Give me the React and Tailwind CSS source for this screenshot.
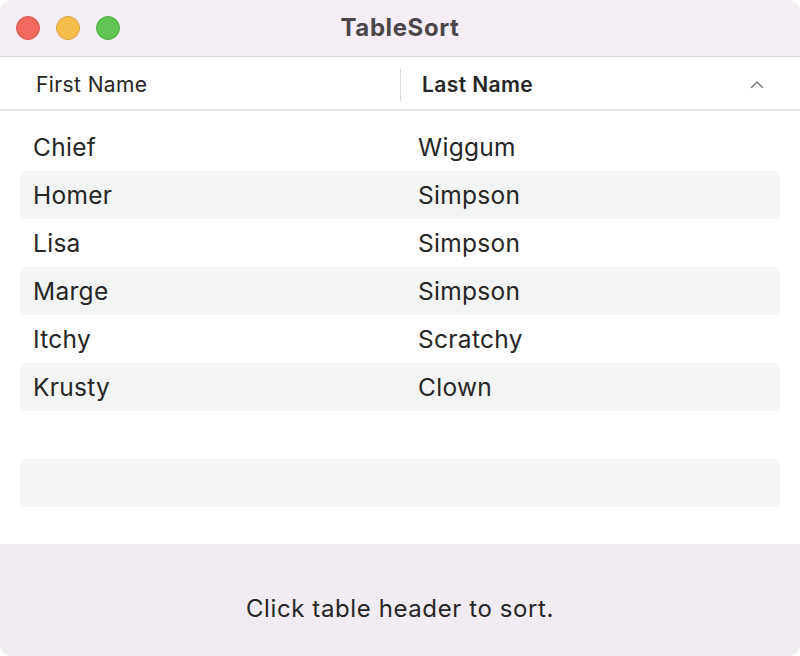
const rows = [
  ["Chief", "Wiggum"],
  ["Homer", "Simpson"],
  ["Lisa", "Simpson"],
  ["Marge", "Simpson"],
  ["Itchy", "Scratchy"],
  ["Krusty", "Clown"],
  ["", ""],
  ["", ""],
];

export default function App() {
  return (
    <div className="h-[656px] w-[800px] bg-white" style={{ fontFamily: "Inter, 'Noto Sans', sans-serif" }}>
      <div className="flex h-full w-full flex-col overflow-hidden rounded-[12px] bg-white text-[#262626]">
        {/* title bar */}
        <div className="relative flex h-[57px] shrink-0 items-center justify-center border-b border-[#d9d7da] bg-[#f5eef5]">
          <div className="absolute left-[16px] top-[16px] flex gap-[16px]">
            <span className="h-[24px] w-[24px] rounded-full border border-[#d9574c] bg-[#ee6a5f]" />
            <span className="h-[24px] w-[24px] rounded-full border border-[#dca33b] bg-[#f5be4f]" />
            <span className="h-[24px] w-[24px] rounded-full border border-[#4fae43] bg-[#61c454]" />
          </div>
          <span className="text-[24px] font-bold tracking-[0.6px] text-[#4b464a]">TableSort</span>
        </div>

        {/* header */}
        <div className="flex h-[54px] shrink-0 items-center border-b-2 border-[#e4e4e4] pt-[3px] text-[21px] tracking-[0.4px]">
          <div className="w-[400px] pl-[36px]">First Name</div>
          <div className="h-[32px] w-px bg-[#dcdcdc]" />
          <div className="flex flex-1 items-center justify-between pl-[21px] pr-[36px] font-semibold">
            <span>Last Name</span>
            <svg width="14" height="9" viewBox="0 0 14 9" fill="none" stroke="#808080" strokeWidth="1.6" strokeLinecap="round" strokeLinejoin="round">
              <path d="M1.5 7.5 L7 2 L12.5 7.5" />
            </svg>
          </div>
        </div>

        {/* rows */}
        <div className="flex flex-1 flex-col px-[20px] pt-[12px] text-[24.5px] tracking-[0.3px]">
          {rows.map((r, i) => (
            <div
              key={i}
              className={`flex h-[48px] shrink-0 items-center rounded-[7px] pt-[1px] ${i % 2 === 1 ? "bg-[#f3f4f4]" : ""}`}
            >
              <div className="w-[398px] pl-[13px]">{r[0]}</div>
              <div>{r[1]}</div>
            </div>
          ))}
        </div>

        {/* footer */}
        <div className="flex h-[112px] shrink-0 items-center justify-center bg-[#f1ecf1] pt-[17px] text-[24px] tracking-[0.6px]">
          Click table header to sort.
        </div>
      </div>
    </div>
  );
}
